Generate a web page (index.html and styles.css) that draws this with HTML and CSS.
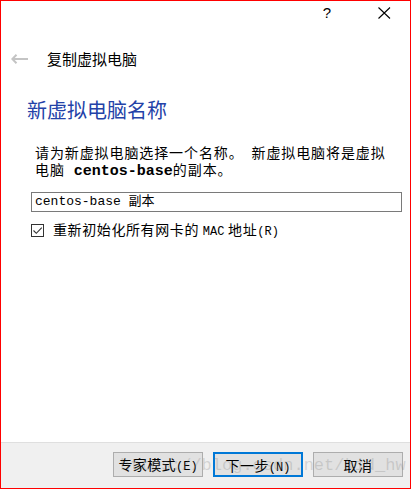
FILE: index.html
```html
<!DOCTYPE html>
<html lang="zh">
<head>
<meta charset="utf-8">
<title>复制虚拟电脑</title>
<link rel="stylesheet" href="styles.css">
</head>
<body>
<div class="window">
  <div class="caption">
    <span class="cap-help">?</span>
    <span class="cap-close">
      <svg width="13" height="12" viewBox="0 0 13 12"><path d="M0.5 0.5 L12 11.5 M12 0.5 L0.5 11.5" stroke="#000" stroke-width="1.1" fill="none"/></svg>
    </span>
  </div>
  <div class="nav">
    <svg class="back" width="17" height="10" viewBox="0 0 17 10"><path d="M1 5 H17 M5.5 0.8 L1.3 5 L5.5 9.2" stroke="#c4c4c4" stroke-width="2" fill="none"/></svg>
    <span class="nav-title">复制虚拟电脑</span>
  </div>
  <div class="content">
    <h1 class="heading">新虚拟电脑名称</h1>
    <p class="desc">请为新虚拟电脑选择一个名称。　新虚拟电脑将是虚拟<br>电脑<b class="mono"> centos-base</b>的副本。</p>
    <div class="input">centos-base 副本</div>
    <label class="check-row">
      <span class="checkbox"><svg width="11" height="11" viewBox="0 0 11 11"><path d="M1.5 5.5 L4.3 8.3 L9.8 2.6" stroke="#333" stroke-width="1.1" fill="none"/></svg></span>
      <span class="check-label">重新初始化所有网卡的 <span class="half">MAC</span> 地址<span class="half">(R)</span></span>
    </label>
  </div>
  <div class="footer">
    <button class="btn">专家模式<span class="half">(E)</span></button>
    <button class="btn default">下一步<span class="half">(N)</span></button>
    <button class="btn">取消</button>
    <span class="watermark">https://blog.csdn.net/kid_hw</span>
  </div>
</div>
</body>
</html>
```

FILE: styles.css
```css
* { box-sizing: border-box; }
html, body {
  margin: 0;
  padding: 0;
  background: #fff;
}
body {
  font-family: "Noto Sans CJK SC", "Noto Sans", sans-serif;
  font-size: 14px;
  color: #000;
}
.window {
  width: 411px;
  height: 489px;
  border: 1px solid #ff0000;
  display: flex;
  flex-direction: column;
  background: #fff;
}
.caption {
  height: 24px;
  display: flex;
  justify-content: flex-end;
  align-items: center;
  padding-right: 19px;
}
.cap-help {
  font-family: "Liberation Sans", sans-serif;
  font-size: 15px;
  line-height: 24px;
  margin-right: 47px;
}
.cap-close {
  display: flex;
  align-items: center;
  height: 24px;
}
.nav {
  margin-top: 24px;
  height: 20px;
  display: flex;
  align-items: center;
  padding-left: 10px;
}
.back { display: block; }
.nav-title {
  margin-left: 19px;
  font-size: 15px;
  line-height: 20px;
}
.content {
  padding-left: 30px;
}
.heading {
  margin: 27px 0 0 -4px;
  font-size: 20px;
  font-weight: normal;
  line-height: 28px;
  color: #2342a8;
  letter-spacing: 0;
}
.desc {
  margin: 20px 0 0 4px;
  line-height: 17px;
  letter-spacing: 0.9px;
}
.mono {
  font-family: "Liberation Mono", monospace;
  font-size: 15px;
  font-weight: bold;
  letter-spacing: 0;
}
.input {
  margin-top: 12px;
  width: 371px;
  height: 20px;
  border: 1px solid #7a7a7a;
  padding-left: 3px;
  font-family: "Liberation Mono", "Noto Sans CJK SC", monospace;
  font-size: 13px;
  line-height: 18px;
}
.check-row {
  margin-top: 8px;
  height: 20px;
  display: flex;
  align-items: center;
}
.checkbox {
  width: 13px;
  height: 13px;
  border: 1px solid #333;
  display: flex;
  align-items: center;
  justify-content: center;
  background: #fff;
}
.check-label {
  margin-left: 9px;
  letter-spacing: 0.6px;
  line-height: 20px;
}
.half {
  font-family: "Liberation Mono", monospace;
  font-size: 12px;
  letter-spacing: 0;
}
.footer {
  position: relative;
  margin-top: auto;
  height: 46px;
  border-top: 1px solid #dfdfdf;
  background: #f0f0f0;
  display: flex;
  justify-content: flex-end;
  align-items: flex-start;
  gap: 10px;
  padding: 9px 7px 0 0;
}
.btn {
  width: 90px;
  height: 25px;
  border: 1px solid #adadad;
  background: #e1e1e1;
  font-family: "Noto Sans CJK SC", sans-serif;
  font-size: 14px;
  color: #000;
  padding: 0;
  line-height: 22px;
  letter-spacing: 0.4px;
}
.btn.default {
  border: 2px solid #0078d7;
}
.watermark {
  position: absolute;
  left: 119px;
  top: 13px;
  font-family: "Liberation Mono", monospace;
  font-size: 17px;
  color: rgba(120, 120, 120, 0.25);
  pointer-events: none;
  white-space: nowrap;
}
```
